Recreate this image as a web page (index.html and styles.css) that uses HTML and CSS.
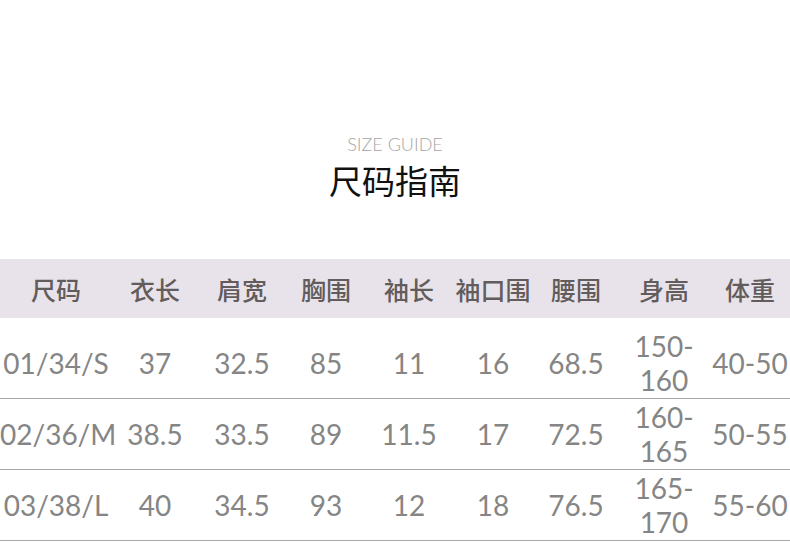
FILE: index.html
```html
<!DOCTYPE html>
<html>
<head>
<meta charset="utf-8">
<link rel="stylesheet" href="styles.css">
</head>
<body>
<div class="page">
  <div class="heading">
    <div class="sub">SIZE GUIDE</div>
    <div class="title">尺码指南</div>
  </div>
  <div class="table">
    <div class="row head">
      <div class="c">尺码</div><div class="c">衣长</div><div class="c">肩宽</div><div class="c">胸围</div><div class="c">袖长</div><div class="c">袖口围</div><div class="c">腰围</div><div class="c">身高</div><div class="c">体重</div>
    </div>
    <div class="body">
      <div class="row">
        <div class="c">01/34/S</div><div class="c">37</div><div class="c">32.5</div><div class="c">85</div><div class="c">11</div><div class="c">16</div><div class="c">68.5</div><div class="c two">150-<br>160</div><div class="c">40-50</div>
      </div>
      <div class="row">
        <div class="c">02/36/M</div><div class="c">38.5</div><div class="c">33.5</div><div class="c">89</div><div class="c">11.5</div><div class="c">17</div><div class="c">72.5</div><div class="c two">160-<br>165</div><div class="c">50-55</div>
      </div>
      <div class="row">
        <div class="c">03/38/L</div><div class="c">40</div><div class="c">34.5</div><div class="c">93</div><div class="c">12</div><div class="c">18</div><div class="c">76.5</div><div class="c two">165-<br>170</div><div class="c">55-60</div>
      </div>
    </div>
  </div>
</div>
</body>
</html>
```
FILE: styles.css
```css
html, body {
  margin: 0;
  padding: 0;
  background: #ffffff;
}
.page {
  width: 790px;
  height: 542px;
  overflow: hidden;
  font-family: "Noto Sans", "Noto Sans CJK SC", sans-serif;
}
.heading {
  padding-top: 134px;
  padding-bottom: 61px;
  text-align: center;
}
.sub {
  font-family: "Lato", "Noto Sans", sans-serif;
  font-weight: 300;
  font-size: 18px;
  line-height: 20px;
  color: #a6a6a6;
}
.title {
  font-family: "Noto Sans CJK SC", sans-serif;
  font-size: 33px;
  line-height: 36px;
  margin-top: 8px;
  color: #111111;
}
.row {
  display: grid;
  grid-template-columns: 112px 86px 88px 80px 86px 82px 84px 92px 80px;
  align-items: center;
}
.c {
  text-align: center;
  white-space: nowrap;
}
.head {
  background: #e8e3ea;
  height: 59px;
  font-family: "Noto Sans CJK SC", sans-serif;
  font-weight: 500;
  font-size: 25px;
  color: #625c5c;
}
.body {
  padding-top: 10px;
}
.body .row {
  height: 70px;
  border-bottom: 1px solid #a9a9a9;
  font-family: "Lato", "Noto Sans", sans-serif;
  font-size: 28px;
  color: #858585;
}
.two {
  line-height: 34px;
}
```
